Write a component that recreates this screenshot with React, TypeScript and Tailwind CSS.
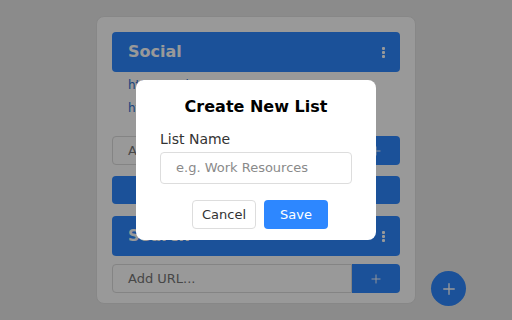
import { Plus } from "lucide-react";

const LISTS = [
  { id: "social", title: "Social", links: ["https://twitter.com", "https://facebook.com"] },
  { id: "search", title: "Search", links: [] as string[] },
];

function KebabIcon() {
  return (
    <div className="flex flex-col gap-[1px]">
      <span className="h-[3px] w-[3px] rounded-[1px] bg-white" />
      <span className="h-[3px] w-[3px] rounded-[1px] bg-white" />
      <span className="h-[3px] w-[3px] rounded-[1px] bg-white" />
    </div>
  );
}

function ListHeader({ title }: { title: string }) {
  return (
    <div className="flex h-10 items-center justify-between rounded-[4px] bg-[#2d87ff] pl-4 pr-[15px]">
      <span className="text-[16px] font-bold text-white">{title}</span>
      <KebabIcon />
    </div>
  );
}

function AddUrlRow() {
  return (
    <div className="flex h-[29px]">
      <div className="flex flex-1 items-center rounded-l-[4px] border border-[#dcdcdc] pl-[15px] text-[13px] text-[#777]">
        Add URL...
      </div>
      <button type="button" className="flex w-12 items-center justify-center rounded-r-[4px] bg-[#2d87ff]">
        <Plus className="h-[14px] w-[14px]" stroke="#fff" strokeWidth={1.6} />
      </button>
    </div>
  );
}

function CreateListModal() {
  return (
    <div className="fixed inset-0 z-20 flex items-center justify-center bg-black/40">
      <div className="flex h-40 w-60 flex-col rounded-[8px] bg-white px-6 pt-[15px]">
        <h2 className="text-center text-[16px] leading-6 font-bold text-black">Create New List</h2>
        <label className="mt-[10px] text-[14px] leading-5 text-[#333]">List Name</label>
        <div className="mt-[3px] flex h-8 items-center rounded-[4px] border border-[#ddd] pl-[15px] text-[13px] text-[#8a8a8a]">
          e.g. Work Resources
        </div>
        <div className="mt-4 flex justify-center gap-2 pl-2">
          <button type="button" className="h-[29px] w-16 rounded-[4px] border border-[#ddd] bg-white text-[13px] text-[#333]">
            Cancel
          </button>
          <button type="button" className="h-[29px] w-16 rounded-[4px] bg-[#2d87ff] text-[13px] text-white">
            Save
          </button>
        </div>
      </div>
    </div>
  );
}

export default function App() {
  const [social, search] = LISTS;

  return (
    <div className="relative h-[320px] w-[512px] bg-[#e8e8e8] pt-4 font-['DejaVu_Sans',sans-serif]">
      <div className="mx-auto flex h-[288px] w-80 flex-col rounded-[8px] border border-[#e2e2e2] bg-white px-[15px] pt-[15px]">
        <ListHeader title={social.title} />
        <ul className="mt-[2px]">
          {social.links.map((l) => (
            <li key={l} className="h-[23px] pl-4 text-[12px] leading-[23px] text-[#2d6fd0]">
              {l}
            </li>
          ))}
        </ul>
        <div className="mt-4">
          <AddUrlRow />
        </div>
        <button type="button" className="mt-[11px] h-7 rounded-[4px] bg-[#2d87ff] text-[13px] text-white">
          + New List
        </button>
        <div className="mt-3">
          <ListHeader title={search.title} />
        </div>
        <div className="mt-2">
          <AddUrlRow />
        </div>
      </div>

      <button
        type="button"
        className="absolute bottom-[14px] right-[46px] flex h-[35px] w-[35px] items-center justify-center rounded-full bg-[#2d87ff]"
      >
        <Plus className="h-[18px] w-[18px]" stroke="#fff" strokeWidth={1.8} />
      </button>

      <CreateListModal />
    </div>
  );
}
